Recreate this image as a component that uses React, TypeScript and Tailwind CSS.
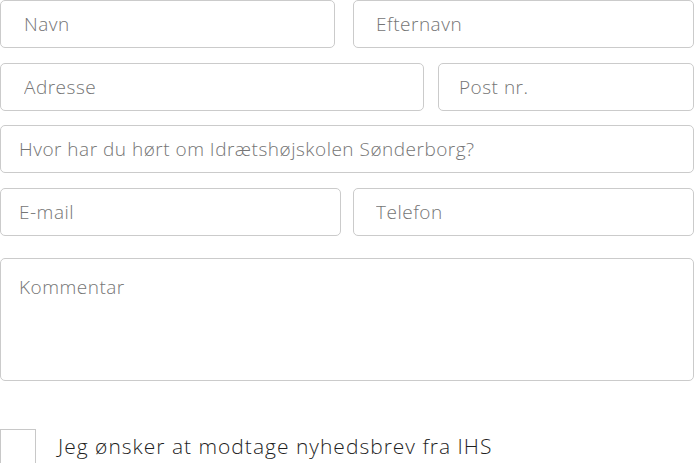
import { useState } from 'react';

const field = 'h-[48px] rounded-[5px] border border-[#cbcbcb] bg-white text-[19px] font-light tracking-[0.5px] text-[#555] placeholder:text-[#757575] focus:outline-none';

export default function App() {
  const [news, setNews] = useState(false);
  return (
    <div className="w-[694px] h-[463px] overflow-hidden bg-white" style={{ fontFamily: '"Open Sans", Lato, sans-serif' }}>
      <div className="flex gap-[18px]">
        <input placeholder="Navn" className={`${field} w-[335px] pl-[23px]`} />
        <input placeholder="Efternavn" className={`${field} flex-1 min-w-0 pl-[22px]`} />
      </div>
      <div className="flex gap-[14px] mt-[15px]">
        <input placeholder="Adresse" className={`${field} w-[424px] pl-[23px]`} />
        <input placeholder="Post nr." className={`${field} flex-1 min-w-0 pl-[20px]`} />
      </div>
      <input placeholder="Hvor har du hørt om Idrætshøjskolen Sønderborg?" className={`${field} w-full pl-[18px] mt-[14px] block`} />
      <div className="flex gap-[12px] mt-[15px]">
        <input placeholder="E-mail" className={`${field} w-[341px] pl-[18px]`} />
        <input placeholder="Telefon" className={`${field} flex-1 min-w-0 pl-[22px]`} />
      </div>
      <textarea placeholder="Kommentar" className={`${field} block w-full h-[123px] mt-[22px] pl-[18px] pt-[14px] resize-none`} />
      <label className="flex items-center gap-[22px] mt-[48px] cursor-pointer">
        <span className="w-[36px] h-[35px] border border-[#c8c8c8] bg-white flex items-center justify-center shrink-0">
          <input type="checkbox" checked={news} onChange={e => setNews(e.target.checked)} className="hidden" />
          {news && <span className="text-[#333] text-lg">✓</span>}
        </span>
        <span className="text-[21px] font-light tracking-[1px] text-[#1f1f1f]">Jeg ønsker at modtage nyhedsbrev fra IHS</span>
      </label>
    </div>
  );
}
